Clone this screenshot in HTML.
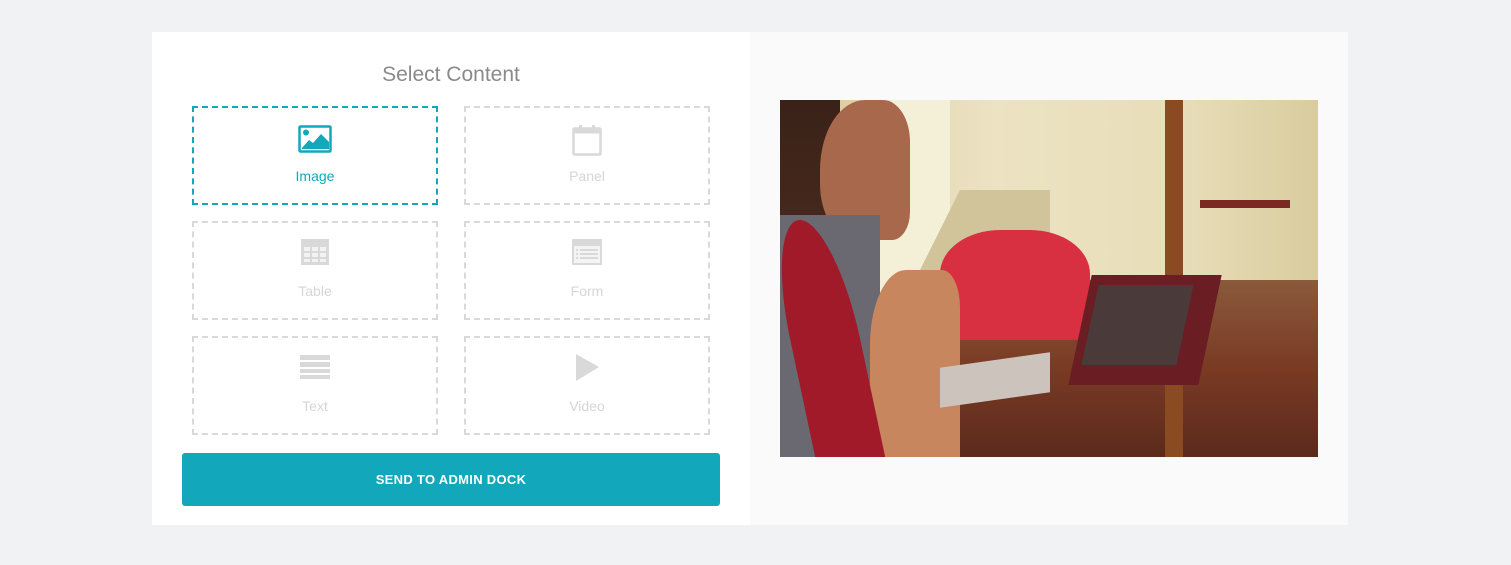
<!DOCTYPE html>
<html><head><style>
*{margin:0;padding:0;box-sizing:border-box}
body{width:1511px;height:565px;background:#f1f2f4;font-family:"Liberation Sans",sans-serif;position:relative;overflow:hidden}
.lp{position:absolute;left:152px;top:32px;width:598px;height:493px;background:#fff}
.rp{position:absolute;left:750px;top:32px;width:598px;height:493px;background:#fafafa}
h1{position:absolute;left:152px;width:598px;top:63px;text-align:center;font-weight:normal;font-size:21px;color:#8a8a8a}
.b{position:absolute;width:246px;height:99px;border:2px dashed #d9d9d9;text-align:center;color:#d6d6d6;font-size:14px}
.b.a{border-color:#12a7bb;color:#12a7bb}
.b svg{position:absolute;left:50%;top:16px;transform:translateX(-50%)}
.b span{position:absolute;left:0;right:0;top:60px}
.btn{position:absolute;left:182px;top:453px;width:538px;height:53px;background:#12a7bb;border-radius:3px;color:#fff;font-weight:bold;font-size:13px;text-align:center;line-height:53px;letter-spacing:.3px}
.ph{position:absolute;left:780px;top:100px;width:538px;height:357px;overflow:hidden;
background:linear-gradient(90deg,#d8c7a0 0%,#ece3c3 40%,#e7ddb8 75%,#d9cc9e 100%)}
.ph div{position:absolute}
</style></head><body>
<div class="lp"></div><div class="rp"></div>
<h1>Select Content</h1>
<div class="b a" style="left:192px;top:106px"><svg width="34" height="30" viewBox="0 0 34 30"><rect x="1.5" y="2.5" width="31" height="25" rx="1" fill="none" stroke="#12a7bb" stroke-width="2.5"/><circle cx="8" cy="8.5" r="3" fill="#12a7bb"/><path d="M4 24 L11 16 L15 19 L23 10 L31 18 V25 H4Z" fill="#12a7bb"/></svg><span>Image</span></div>
<div class="b" style="left:464px;top:106px"><svg width="30" height="32" viewBox="0 0 30 32"><rect x="1.5" y="4.5" width="27" height="26" rx="1" fill="none" stroke="#d9d9d9" stroke-width="2.5"/><rect x="1.5" y="4.5" width="27" height="5" fill="#d9d9d9"/><rect x="7" y="1" width="3" height="7" fill="#d9d9d9"/><rect x="20" y="1" width="3" height="7" fill="#d9d9d9"/></svg><span>Panel</span></div>
<div class="b" style="left:192px;top:221px"><svg width="28" height="26" viewBox="0 0 28 26"><rect width="28" height="26" fill="#d9d9d9"/><g fill="#f2f2f2"><rect x="3" y="8" width="6" height="4"/><rect x="11" y="8" width="6" height="4"/><rect x="19" y="8" width="6" height="4"/><rect x="3" y="14" width="6" height="4"/><rect x="11" y="14" width="6" height="4"/><rect x="19" y="14" width="6" height="4"/><rect x="3" y="20" width="6" height="3"/><rect x="11" y="20" width="6" height="3"/><rect x="19" y="20" width="6" height="3"/></g></svg><span>Table</span></div>
<div class="b" style="left:464px;top:221px"><svg width="30" height="26" viewBox="0 0 30 26"><rect width="30" height="26" rx="1" fill="#d9d9d9"/><rect x="2" y="7" width="26" height="17" fill="#f4f4f4"/><g fill="#d9d9d9"><rect x="4" y="10" width="2" height="2"/><rect x="8" y="10" width="18" height="2"/><rect x="4" y="14" width="2" height="2"/><rect x="8" y="14" width="18" height="2"/><rect x="4" y="18" width="2" height="2"/><rect x="8" y="18" width="18" height="2"/></g></svg><span>Form</span></div>
<div class="b" style="left:192px;top:336px"><svg width="30" height="26" viewBox="0 0 30 26"><g fill="#d9d9d9"><rect y="1" width="30" height="5"/><rect y="8" width="30" height="5"/><rect y="15" width="30" height="4"/><rect y="21" width="30" height="4"/></g></svg><span>Text</span></div>
<div class="b" style="left:464px;top:336px"><svg width="26" height="28" viewBox="0 0 26 28"><path d="M2 0 L25 13 L2 27Z" fill="#d9d9d9"/></svg><span>Video</span></div>
<div class="btn">SEND TO ADMIN DOCK</div>
<div class="ph">
<div style="left:100px;top:0;width:70px;height:200px;background:#f4f0d8"></div>
<div style="left:120px;top:90px;width:150px;height:120px;background:#d2c49a;clip-path:polygon(40% 0,100% 0,100% 100%,0 100%)"></div>
<div style="left:130px;top:180px;width:408px;height:177px;background:linear-gradient(180deg,#8a5a3c,#7a3a24 50%,#5a2a1c)"></div>
<div style="left:160px;top:130px;width:150px;height:110px;background:#d83040;border-radius:40% 40% 10% 10%"></div>
<div style="left:385px;top:0;width:18px;height:357px;background:#8a4a22"></div>
<div style="left:420px;top:100px;width:90px;height:8px;background:#7a2a22"></div>
<div style="left:300px;top:175px;width:130px;height:110px;background:#6a1e24;transform:skewX(-12deg)"></div>
<div style="left:310px;top:185px;width:95px;height:80px;background:#4a3a3a;transform:skewX(-12deg)"></div>
<div style="left:0;top:0;width:60px;height:357px;background:linear-gradient(180deg,#3a2218,#5a3428)"></div>
<div style="left:40px;top:0;width:90px;height:140px;background:#a8684c;border-radius:50% 30% 20% 40%"></div>
<div style="left:0;top:115px;width:100px;height:242px;background:#6a6870"></div>
<div style="left:90px;top:170px;width:90px;height:187px;background:#c8865e;border-radius:40% 20% 0 0"></div>
<div style="left:160px;top:260px;width:110px;height:40px;background:#ccc4bc;transform:skewY(-8deg)"></div>
<div style="left:10px;top:120px;width:70px;height:237px;background:#a01a2a;transform:skewX(12deg);border-radius:50% 50% 0 0"></div>
</div>
</body></html>
